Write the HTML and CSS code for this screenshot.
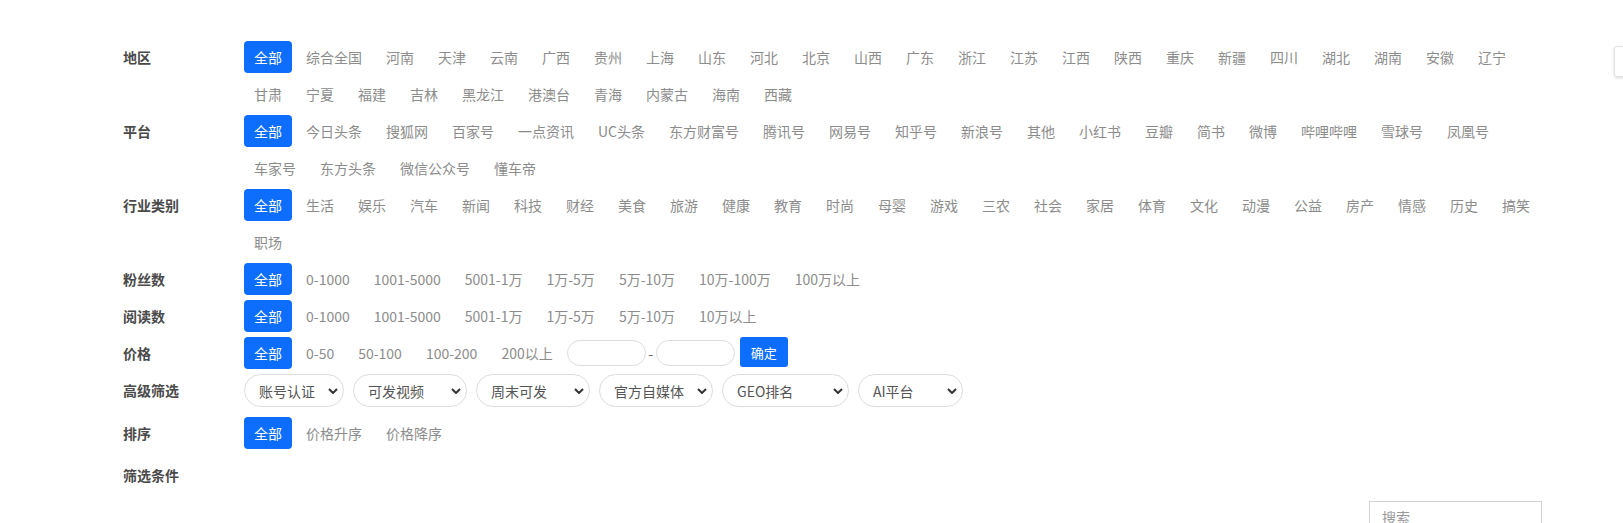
FILE: index.html
```html
<!DOCTYPE html>
<html>

<head>
    <title>资源筛选</title>
    <link rel="stylesheet" href="styles.css">
</head>

<body>
    <div class="filter">
        <div class="row">
            <div class="label">地区</div>
            <div class="items">
                <span class="item active">全部</span>
                <span class="item">综合全国</span>
                <span class="item">河南</span>
                <span class="item">天津</span>
                <span class="item">云南</span>
                <span class="item">广西</span>
                <span class="item">贵州</span>
                <span class="item">上海</span>
                <span class="item">山东</span>
                <span class="item">河北</span>
                <span class="item">北京</span>
                <span class="item">山西</span>
                <span class="item">广东</span>
                <span class="item">浙江</span>
                <span class="item">江苏</span>
                <span class="item">江西</span>
                <span class="item">陕西</span>
                <span class="item">重庆</span>
                <span class="item">新疆</span>
                <span class="item">四川</span>
                <span class="item">湖北</span>
                <span class="item">湖南</span>
                <span class="item">安徽</span>
                <span class="item">辽宁</span>
                <span class="item">甘肃</span>
                <span class="item">宁夏</span>
                <span class="item">福建</span>
                <span class="item">吉林</span>
                <span class="item">黑龙江</span>
                <span class="item">港澳台</span>
                <span class="item">青海</span>
                <span class="item">内蒙古</span>
                <span class="item">海南</span>
                <span class="item">西藏</span>
            </div>
        </div>

        <div class="row">
            <div class="label">平台</div>
            <div class="items">
                <span class="item active">全部</span>
                <span class="item">今日头条</span>
                <span class="item">搜狐网</span>
                <span class="item">百家号</span>
                <span class="item">一点资讯</span>
                <span class="item">UC头条</span>
                <span class="item">东方财富号</span>
                <span class="item">腾讯号</span>
                <span class="item">网易号</span>
                <span class="item">知乎号</span>
                <span class="item">新浪号</span>
                <span class="item">其他</span>
                <span class="item">小红书</span>
                <span class="item">豆瓣</span>
                <span class="item">简书</span>
                <span class="item">微博</span>
                <span class="item">哔哩哔哩</span>
                <span class="item">雪球号</span>
                <span class="item">凤凰号</span>
                <span class="item">车家号</span>
                <span class="item">东方头条</span>
                <span class="item">微信公众号</span>
                <span class="item">懂车帝</span>
            </div>
        </div>

        <div class="row">
            <div class="label">行业类别</div>
            <div class="items">
                <span class="item active">全部</span>
                <span class="item">生活</span>
                <span class="item">娱乐</span>
                <span class="item">汽车</span>
                <span class="item">新闻</span>
                <span class="item">科技</span>
                <span class="item">财经</span>
                <span class="item">美食</span>
                <span class="item">旅游</span>
                <span class="item">健康</span>
                <span class="item">教育</span>
                <span class="item">时尚</span>
                <span class="item">母婴</span>
                <span class="item">游戏</span>
                <span class="item">三农</span>
                <span class="item">社会</span>
                <span class="item">家居</span>
                <span class="item">体育</span>
                <span class="item">文化</span>
                <span class="item">动漫</span>
                <span class="item">公益</span>
                <span class="item">房产</span>
                <span class="item">情感</span>
                <span class="item">历史</span>
                <span class="item">搞笑</span>
                <span class="item">职场</span>
            </div>
        </div>

        <div class="row">
            <div class="label">粉丝数</div>
            <div class="items">
                <span class="item active">全部</span>
                <span class="item">0-1000</span>
                <span class="item">1001-5000</span>
                <span class="item">5001-1万</span>
                <span class="item">1万-5万</span>
                <span class="item">5万-10万</span>
                <span class="item">10万-100万</span>
                <span class="item">100万以上</span>
            </div>
        </div>

        <div class="row">
            <div class="label">阅读数</div>
            <div class="items">
                <span class="item active">全部</span>
                <span class="item">0-1000</span>
                <span class="item">1001-5000</span>
                <span class="item">5001-1万</span>
                <span class="item">1万-5万</span>
                <span class="item">5万-10万</span>
                <span class="item">10万以上</span>
            </div>
        </div>

        <div class="row">
            <div class="label">价格</div>
            <div class="items">
                <span class="item active">全部</span>
                <span class="item">0-50</span>
                <span class="item">50-100</span>
                <span class="item">100-200</span>
                <span class="item">200以上</span>
                <input class="price-input" type="text">
                <span class="dash">-</span>
                <input class="price-input" type="text">
                <button class="btn-ok">确定</button>
            </div>
        </div>

        <div class="row row-select">
            <div class="label">高级筛选</div>
            <div class="items">
                <div class="select w100">
                    <select><option>账号认证</option></select>
                    <svg class="caret" viewBox="0 0 10 6"><path d="M1 1l4 4 4-4" /></svg>
                </div>
                <div class="select w114">
                    <select><option>可发视频</option></select>
                    <svg class="caret" viewBox="0 0 10 6"><path d="M1 1l4 4 4-4" /></svg>
                </div>
                <div class="select w114">
                    <select><option>周末可发</option></select>
                    <svg class="caret" viewBox="0 0 10 6"><path d="M1 1l4 4 4-4" /></svg>
                </div>
                <div class="select w114">
                    <select><option>官方自媒体</option></select>
                    <svg class="caret" viewBox="0 0 10 6"><path d="M1 1l4 4 4-4" /></svg>
                </div>
                <div class="select w127">
                    <select><option>GEO排名</option></select>
                    <svg class="caret" viewBox="0 0 10 6"><path d="M1 1l4 4 4-4" /></svg>
                </div>
                <div class="select w105">
                    <select><option>AI平台</option></select>
                    <svg class="caret" viewBox="0 0 10 6"><path d="M1 1l4 4 4-4" /></svg>
                </div>
            </div>
        </div>

        <div class="row">
            <div class="label">排序</div>
            <div class="items">
                <span class="item active">全部</span>
                <span class="item">价格升序</span>
                <span class="item">价格降序</span>
            </div>
        </div>

        <div class="row row-cond">
            <div class="label">筛选条件</div>
            <div class="items"></div>
        </div>
    </div>

    <div class="toolbar">
        <input class="search" type="text" placeholder="搜索">
    </div>

    <div class="side-tab"></div>
</body>

</html>
```

FILE: styles.css
```css
body {
    margin: 0;
    font-family: "Noto Sans CJK SC", "Noto Sans", sans-serif;
    font-size: 14px;
    background-color: #fff;
    color: #333;
    overflow: hidden;
}

.filter {
    margin-left: 107px;
    padding: 41px 0 0 16px;
}

.row {
    display: flex;
}

.label {
    width: 121px;
    flex-shrink: 0;
    height: 32px;
    line-height: 32px;
    font-weight: bold;
    color: #4a4a4a;
}

.items {
    display: flex;
    flex-wrap: wrap;
    align-items: flex-start;
    width: 1310px;
}

.item {
    height: 32px;
    line-height: 32px;
    padding: 0 10px;
    margin: 0 4px 5px 0;
    border-radius: 4px;
    color: #8c8c8c;
    cursor: pointer;
    white-space: nowrap;
}

.item.active {
    background-color: #0d6efd;
    color: #fff;
}

.price-input {
    width: 79px;
    height: 26px;
    box-sizing: border-box;
    border: 1px solid #ddd;
    border-radius: 13px;
    outline: none;
    margin: 3px 0 0 0;
    padding: 0 10px;
}

.dash {
    color: #666;
    width: 10px;
    line-height: 32px;
    text-align: center;
}

.btn-ok {
    margin: 0 0 0 5px;
    width: 48px;
    height: 30px;
    border: none;
    border-radius: 3px;
    background-color: #0d6efd;
    color: #fff;
    font-family: inherit;
    font-size: 13px;
    padding: 0;
}

.row-select .items {
    gap: 0 9px;
    margin-bottom: 10px;
}

.row-select .label {
    height: 33px;
    line-height: 33px;
}

.select {
    position: relative;
    height: 33px;
}

.select select {
    appearance: none;
    -webkit-appearance: none;
    width: 100%;
    height: 33px;
    box-sizing: border-box;
    border: 1px solid #dcdcdc;
    border-radius: 17px;
    background-color: #fff;
    padding: 0 24px 0 14px;
    font-family: inherit;
    font-size: 14px;
    color: #555;
    outline: none;
}

.caret {
    position: absolute;
    right: 6px;
    top: 14px;
    width: 10px;
    height: 6px;
    pointer-events: none;
}

.caret path {
    fill: none;
    stroke: #333;
    stroke-width: 2;
}

.w100 { width: 100px; }
.w105 { width: 105px; }
.w114 { width: 114px; }
.w127 { width: 127px; }

.row-cond {
    margin-top: 5px;
}

.toolbar {
    width: 1542px;
    display: flex;
    justify-content: flex-end;
    margin-top: 10px;
}

.search {
    width: 173px;
    height: 32px;
    box-sizing: border-box;
    border: 1px solid #d2d2dc;
    padding: 0 12px;
    font-family: inherit;
    font-size: 14px;
    outline: none;
}

.search::placeholder {
    color: #999;
}

.side-tab {
    position: fixed;
    left: 1614px;
    top: 46px;
    width: 30px;
    height: 29px;
    border: 1px solid #e2e2e2;
    border-radius: 3px;
    background-color: #fff;
    box-shadow: 0 1px 3px rgba(0, 0, 0, 0.15);
}
```
